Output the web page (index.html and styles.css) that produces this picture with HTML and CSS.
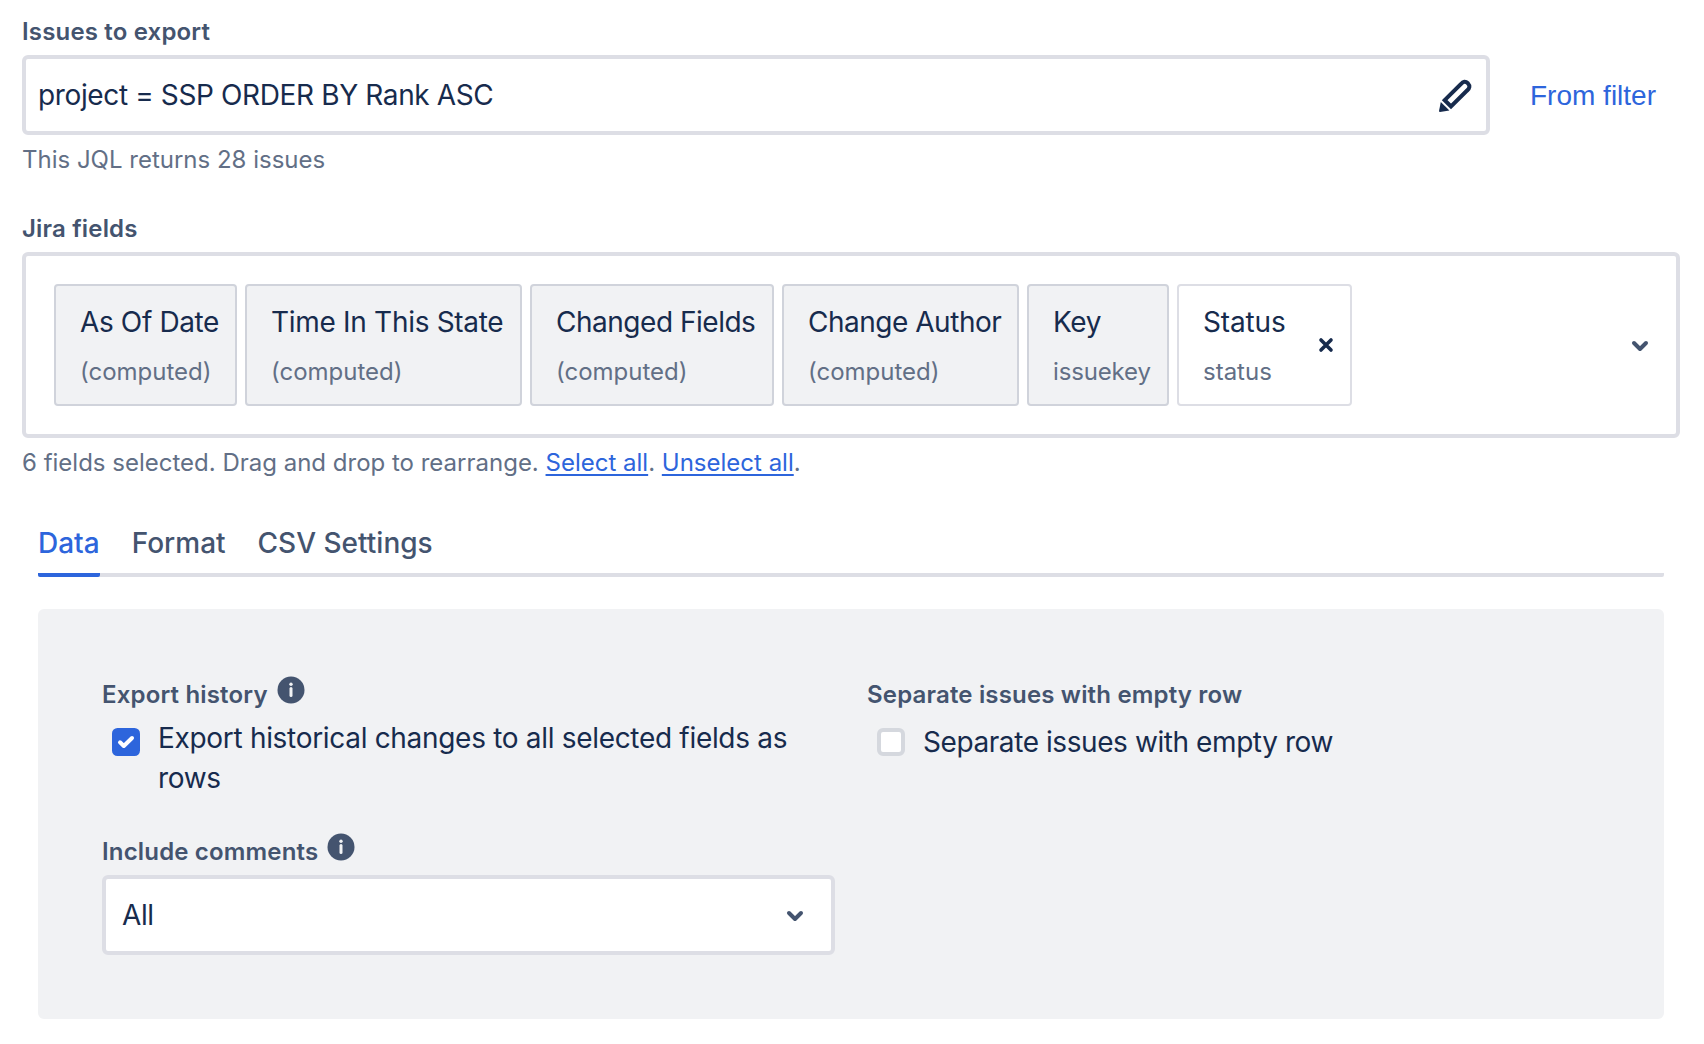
FILE: index.html
```html
<!DOCTYPE html>
<html lang="en">
<head>
<meta charset="utf-8">
<title>Export issues</title>
<link rel="stylesheet" href="styles.css">
</head>
<body>
<main class="form">
  <section class="field">
    <h2 class="label">Issues to export</h2>
    <div class="query-row">
      <div class="box query">
        <span class="value">project = SSP ORDER BY Rank ASC</span>
        <svg class="pencil" viewBox="0 0 33 33" width="33" height="33">
          <path d="M5.7 21.2 L21.8 5.2 Q25.3 .9 28.9 4.3 Q32.3 8 28 11.6 L12 27.5 Z" fill="none" stroke="#172b4d" stroke-width="4" stroke-linejoin="miter"/>
          <path d="M1.8 22.9 L10.4 31.5 L1 33 Q0 33 0 32 Z" fill="#172b4d"/>
        </svg>
      </div>
      <a class="filter-link">From filter</a>
    </div>
    <p class="hint">This JQL returns 28 issues</p>
  </section>

  <section class="field">
    <h2 class="label">Jira fields</h2>
    <div class="box picker">
      <ul class="chips">
        <li class="chip chip-date"><span class="value">As Of Date</span><span class="sub">(computed)</span></li>
        <li class="chip chip-time"><span class="value">Time In This State</span><span class="sub">(computed)</span></li>
        <li class="chip chip-changed"><span class="value">Changed Fields</span><span class="sub">(computed)</span></li>
        <li class="chip chip-author"><span class="value">Change Author</span><span class="sub">(computed)</span></li>
        <li class="chip chip-key"><span class="value">Key</span><span class="sub">issuekey</span></li>
        <li class="chip chip-status">
          <div class="chip-text"><span class="value">Status</span><span class="sub">status</span></div>
          <svg class="remove" viewBox="0 0 16 16" width="16" height="16"><path d="M3 3 L13 13 M13 3 L3 13" stroke="#172b4d" stroke-width="3.6" stroke-linecap="round"/></svg>
        </li>
      </ul>
      <svg class="chevron" viewBox="0 0 18 12" width="18" height="12"><path d="M3 3 L9 9 L15 3" fill="none" stroke="#44546f" stroke-width="4" stroke-linecap="round" stroke-linejoin="round"/></svg>
    </div>
    <p class="hint">6 fields selected. Drag and drop to rearrange. <a>Select all</a>. <a>Unselect all</a>.</p>
  </section>

  <section class="settings">
    <nav class="tabs">
      <a class="tab tab-active">Data</a>
      <a class="tab">Format</a>
      <a class="tab">CSV Settings</a>
    </nav>
    <div class="panel">
      <div class="column">
        <div class="field">
          <h3 class="label">Export history
            <svg class="info" viewBox="0 0 28 28" width="28" height="28"><circle cx="14" cy="14" r="13.5" fill="#44546f"/><circle cx="14" cy="8.2" r="1.7" fill="#f1f2f4"/><path d="M14 12.5 V19.5" stroke="#f1f2f4" stroke-width="3" stroke-linecap="round"/></svg>
          </h3>
          <label class="check check-history">
            <svg class="tick" viewBox="0 0 28 28" width="28" height="28"><rect width="28" height="28" rx="5.5" fill="#2d65dc"/><path d="M8 14.3 L11.8 18 L20 10" fill="none" stroke="#fff" stroke-width="4" stroke-linecap="round" stroke-linejoin="round"/></svg>
            <span class="value">Export historical changes to all selected fields as rows</span>
          </label>
        </div>
        <div class="field">
          <h3 class="label">Include comments
            <svg class="info" viewBox="0 0 28 28" width="28" height="28"><circle cx="14" cy="14" r="13.5" fill="#44546f"/><circle cx="14" cy="8.2" r="1.7" fill="#f1f2f4"/><path d="M14 12.5 V19.5" stroke="#f1f2f4" stroke-width="3" stroke-linecap="round"/></svg>
          </h3>
          <div class="box select">
            <span class="value">All</span>
            <svg class="chevron" viewBox="0 0 18 12" width="18" height="12"><path d="M3 3 L9 9 L15 3" fill="none" stroke="#44546f" stroke-width="4" stroke-linecap="round" stroke-linejoin="round"/></svg>
          </div>
        </div>
      </div>
      <div class="column">
        <h3 class="label">Separate issues with empty row</h3>
        <label class="check check-single">
          <span class="empty"></span>
          <span class="value">Separate issues with empty row</span>
        </label>
      </div>
    </div>
  </section>
</main>
</body>
</html>
```
FILE: styles.css
```css
* {
  box-sizing: border-box;
}

body {
  margin: 0;
  background: #fff;
  font-family: Inter, "Liberation Sans", sans-serif;
  color: #172b4d;
}

h2, h3, p, ul {
  margin: 0;
  padding: 0;
}

svg {
  display: block;
  flex: none;
}

.form {
  display: flex;
  flex-direction: column;
  gap: 37px;
  padding: 16px 24px 0 22px;
}

.label {
  display: flex;
  align-items: center;
  gap: 9px;
  height: 32px;
  margin-bottom: 7px;
  font-size: 24px;
  font-weight: 600;
  line-height: 32px;
  letter-spacing: 0.17px;
  white-space: nowrap;
  color: #44546f;
}

.value {
  font-size: 28px;
  line-height: 40px;
  letter-spacing: -0.37px;
}

.hint {
  margin-top: 9px;
  font-size: 24px;
  line-height: 32px;
  color: #626f86;
}

.hint a {
  color: #2d65dc;
  text-decoration: underline;
  text-decoration-thickness: 2px;
  text-underline-offset: 3px;
}

.box {
  display: flex;
  align-items: center;
  justify-content: space-between;
  border: 4px solid #dddee5;
  border-radius: 6px;
  background: #fff;
}

.query-row {
  display: flex;
  align-items: center;
  gap: 40px;
}

.query {
  width: 1468px;
  height: 80px;
  padding: 0 14px 0 12px;
}

.filter-link {
  padding-top: 2px;
  font: 28px/40px "Liberation Sans", Arial, sans-serif;
  color: #2d65dc;
}

.picker {
  height: 186px;
  padding: 0 27px 0 28px;
}

.chevron {
  margin-top: 2px;
}

.chips {
  display: flex;
  gap: 8px;
  list-style: none;
}

.chip {
  display: flex;
  flex-direction: column;
  height: 122px;
  padding: 16px 0 0 24px;
  border: 2px solid #d0d3db;
  border-radius: 4px;
  background: #f1f2f4;
  white-space: nowrap;
}

.chip-date { width: 183px; }
.chip-time { width: 277px; }
.chip-changed { width: 244px; }
.chip-author { width: 237px; }
.chip-key { width: 142px; }

.chip-time .value { letter-spacing: -0.3px; }

.chip-changed .value,
.chip-author .value { letter-spacing: -0.48px; }

.chip-key .sub { letter-spacing: -0.15px; }

.chip-status {
  flex-direction: row;
  justify-content: space-between;
  width: 175px;
  padding-right: 16px;
  border-color: #dddee5;
  background: #fff;
}

.chip-status .value { letter-spacing: -0.15px; }

.chip-text {
  display: flex;
  flex-direction: column;
}

.sub {
  margin-top: 14px;
  font-size: 24px;
  line-height: 32px;
  color: #626f86;
}

.remove {
  margin-top: 35px;
}

.settings {
  margin-top: 7px;
  padding: 0 16px;
}

.tabs {
  display: flex;
  gap: 32px;
  height: 54px;
  border-bottom: 4px solid #dddee5;
  border-radius: 2px;
}

.tab {
  height: 54px;
  font-size: 28px;
  font-weight: 500;
  line-height: 40px;
  color: #44546f;
}

.tab-active {
  border-bottom: 4px solid #2d65dc;
  border-radius: 2px;
  color: #2d65dc;
}

.panel {
  display: grid;
  grid-template-columns: 733px 733px;
  gap: 32px;
  margin-top: 32px;
  padding: 70px 64px 64px;
  border-radius: 6px;
  background: #f1f2f4;
}

.column {
  display: flex;
  flex-direction: column;
  gap: 38px;
}

.column > .label {
  margin-bottom: -31px;
}

.info {
  margin-bottom: 10px;
}

.check {
  display: flex;
  gap: 18px;
  padding: 0 20px 0 10px;
}

.check-history .value {
  letter-spacing: -0.31px;
}

.check-single {
  margin-top: 4px;
}

.check-single .value {
  letter-spacing: -0.42px;
}

.tick {
  margin-top: 10px;
}

.empty {
  flex: none;
  width: 28px;
  height: 28px;
  margin-top: 6px;
  border: 4px solid #d5d8de;
  border-radius: 6px;
  background: #fff;
}

.select {
  height: 80px;
  padding: 0 27px 0 16px;
}
```
